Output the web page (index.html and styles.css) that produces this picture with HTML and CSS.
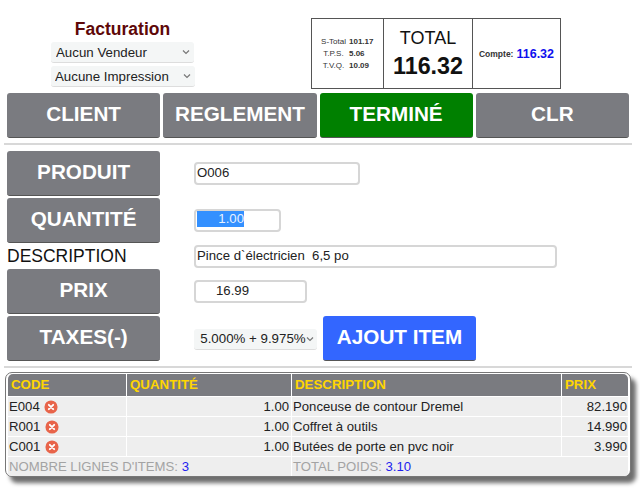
FILE: index.html
```html
<!DOCTYPE html>
<html lang="fr">
<head>
<meta charset="utf-8">
<title>Facturation</title>
<link rel="stylesheet" href="styles.css">
</head>
<body>
<header class="top">
  <div class="brand">
    <h1>Facturation</h1>
    <select class="sel sel-a"><option>Aucun Vendeur</option></select>
    <select class="sel sel-b"><option>Aucune Impression</option></select>
  </div>
  <div class="summary">
    <div class="cell c1">
      <div class="sub"><span class="k">S-Total</span><b>101.17</b></div>
      <div class="sub"><span class="k">T.P.S.</span><b>5.06</b></div>
      <div class="sub"><span class="k">T.V.Q.</span><b>10.09</b></div>
    </div>
    <div class="cell c2">
      <div class="tl">TOTAL</div>
      <div class="tv">116.32</div>
    </div>
    <div class="cell c3"><b class="cl">Compte:</b> <b class="cv">116.32</b></div>
  </div>
</header>
<nav class="actions">
  <button class="btn">CLIENT</button>
  <button class="btn">REGLEMENT</button>
  <button class="btn green">TERMINÉ</button>
  <button class="btn">CLR</button>
</nav>
<hr class="rule">
<section class="form">
  <div class="row"><button class="btn">PRODUIT</button><div class="field f-prod">O006</div></div>
  <div class="row"><button class="btn">QUANTITÉ</button><div class="field f-qty"><span class="picked">1.00</span></div></div>
  <div class="row desc"><span class="dlabel">DESCRIPTION</span><div class="field f-desc">Pince d`électricien&nbsp; 6,5 po</div></div>
  <div class="row"><button class="btn">PRIX</button><div class="field f-prix">16.99</div></div>
  <div class="row"><button class="btn">TAXES(-)</button><select class="sel sel-t"><option>5.000% + 9.975%</option></select><button class="add">AJOUT ITEM</button></div>
</section>
<hr class="rule rule2">
<div class="panel">
  <table>
    <colgroup><col class="w1"><col class="w2"><col class="w3"><col class="w4"></colgroup>
    <thead><tr><th>CODE</th><th>QUANTITÉ</th><th>DESCRIPTION</th><th>PRIX</th></tr></thead>
    <tbody>
      <tr><td class="code">E004 <svg class="x" viewBox="0 0 16 16"><circle cx="8" cy="8" r="7.5" fill="#e8644a"/><path d="M5.5 5.5l5 5M10.500 5.500l-5 5" stroke="#fff" stroke-width="2.200" stroke-linecap="round"/></svg></td><td class="r q">1.00</td><td class="d">Ponceuse de contour Dremel</td><td class="r">82.190</td></tr>
      <tr><td class="code">R001 <svg class="x" viewBox="0 0 16 16"><circle cx="8" cy="8" r="7.5" fill="#e8644a"/><path d="M5.5 5.5l5 5M10.500 5.500l-5 5" stroke="#fff" stroke-width="2.200" stroke-linecap="round"/></svg></td><td class="r q">1.00</td><td class="d">Coffret à outils</td><td class="r">14.990</td></tr>
      <tr><td class="code">C001 <svg class="x" viewBox="0 0 16 16"><circle cx="8" cy="8" r="7.5" fill="#e8644a"/><path d="M5.5 5.5l5 5M10.500 5.500l-5 5" stroke="#fff" stroke-width="2.200" stroke-linecap="round"/></svg></td><td class="r q">1.00</td><td class="d">Butées de porte en pvc noir</td><td class="r">3.990</td></tr>
    </tbody>
    <tfoot><tr><td class="code" colspan="2">NOMBRE LIGNES D'ITEMS: <span class="blue">3</span></td><td class="d" colspan="2">TOTAL POIDS: <span class="blue">3.10</span></td></tr></tfoot>
  </table>
</div>
</body>
</html>
```
FILE: styles.css
```css
* { box-sizing: border-box; }
html, body { margin: 0; padding: 0; background: #fff; }
body { width: 640px; height: 489px; overflow: hidden; font-family: "Liberation Sans", Arial, sans-serif; color: #111; }

.top { display: flex; height: 93px; padding-top: 18px; }
.brand { width: 245px; padding-left: 51px; display: flex; flex-direction: column; }
.brand h1 { margin: 2px 0 0; width: 143px; font-size: 17.500px; line-height: 19px; height: 23px; font-weight: bold; color: #5e0808; text-align: center; }

.sel { appearance: none; -webkit-appearance: none; font-family: "Liberation Sans", Arial, sans-serif; font-size: 13.300px; color: #222; border: 0; border-bottom: 1px solid #ddd; border-radius: 3px; height: 21px; padding: 0 0 0 5px; background: #f4f6f6 url("data:image/svg+xml;utf8,<svg xmlns='http://www.w3.org/2000/svg' width='8' height='6'><path d='M1 1.500l3 3 3-3' fill='none' stroke='%23777' stroke-width='1.200'/></svg>") no-repeat right 4px center; }
.sel-a { width: 143px; margin-top: -1px; }
.sel-b { width: 144px; margin-top: 3px; padding-left: 4px; }

.summary { margin-left: 66px; width: 250px; height: 71px; display: flex; border: 1px solid #555; }
.cell { height: 100%; }
.c1 { width: 72px; border-right: 1px solid #555; padding-top: 17px; padding-left: 9px; }
.sub { display: flex; font-size: 8px; line-height: 12px; color: #333; }
.sub .k { width: 25px; margin-right: 3px; text-align: center; white-space: nowrap; }
.c2 { width: 89px; border-right: 1px solid #555; text-align: center; padding-top: 9px; }
.tl { font-size: 18px; line-height: 21px; color: #111; }
.tv { font-size: 23.300px; line-height: 30px; font-weight: bold; color: #111; margin-top: 2px; }
.c3 { flex: 1; display: flex; align-items: center; justify-content: center; gap: 3px; }
.cl { font-size: 8.500px; color: #333; }
.cv { font-size: 12.500px; color: #1010ee; }

.actions { display: flex; gap: 3px; padding-left: 7px; }
.btn { width: 153.250px; height: 45px; border: 0; border-bottom: 1px solid #555; border-radius: 3px; background: #7a7b80; color: #fff; font-family: "Liberation Sans", Arial, sans-serif; font-size: 20.700px; font-weight: bold; padding: 0 0 3px; flex: none; }
.green { background: #008000; }

.rule { margin: 5px 0 0 4px; width: 628px; height: 2px; border: 0; background: #d8d8d8; }

.form { padding: 6px 0 0 7px; display: flex; flex-direction: column; gap: 2px; }
.row { display: flex; align-items: center; height: 45px; }
.desc { height: 22px; }
.dlabel { width: 187px; font-size: 17.500px; color: #111; }
.field { height: 23px; border: 2px solid #d6d6d6; border-radius: 4px; background: #fff; font-size: 13.200px; line-height: 17px; color: #222; padding-left: 1px; }
.row .btn + .field { margin-left: 33.750px; }
.f-prod { width: 166px; }
.f-qty { width: 87px; }
.f-desc { width: 363px; }
.f-prix { width: 113px; padding-left: 20px; }
.picked { display: block; margin-top: 0; margin-left: 0; width: 47px; height: 16px; line-height: 16px; background: #3390ff; color: #e8f2ff; text-align: right; }
.sel-t { width: 123px; margin-left: 34px; height: 21px; margin-top: 1px; padding-left: 6px; background-position: right 3px center; }
.add { width: 153px; height: 45px; margin-left: 5.750px; border: 0; border-bottom: 1px solid #555; border-radius: 3px; background: #3366ff; color: #fff; font-family: "Liberation Sans", Arial, sans-serif; font-size: 20.700px; font-weight: bold; padding: 0 0 3px; }

.rule2 { margin-top: 5px; }

.panel { margin: 4px 0 0 5px; width: 626px; height: 105px; background: #fff; border: 1px solid #777; border-radius: 7px; box-shadow: 5px 6px 4px #6e6e6e; padding: 1px 1px 2px 2px; overflow: hidden; }
table { width: 620px; border-collapse: separate; border-spacing: 0; table-layout: fixed; font-size: 13.150px; }
.w1 { width: 119px; }
.w2 { width: 165px; }
.w3 { width: 270px; }
.w4 { width: 66px; }
th { background: #7a7b80; color: #ffd500; font-size: 13.300px; font-weight: bold; text-align: left; height: 22px; padding: 0 0 2px 3px; border-right: 1px solid #fff; }
th:last-child, td:last-child { border-right: 0; }
thead th:first-child { border-top-left-radius: 5px; }
thead th:last-child { border-top-right-radius: 5px; }
td { background: #eeeeee; color: #222; height: 20px; padding: 0 1px 1px 2px; border-top: 1px solid #fff; border-right: 1px solid #fff; white-space: nowrap; }
td.code { padding-left: 1px; }
td.q { padding-right: 2px; }
td.d { padding-left: 1px; }
.r { text-align: right; }
.x { width: 14px; height: 14px; vertical-align: -3px; margin-left: 1px; }
tfoot td { color: #a3a3a3; height: 20px; }
.blue { color: #2222ee; }
```
